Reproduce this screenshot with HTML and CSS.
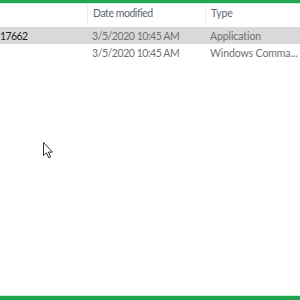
FILE: index.html
```html
<!DOCTYPE html>
<html>
<head>
<meta charset="utf-8">
<link rel="stylesheet" href="styles.css">
</head>
<body>
<div class="frame">
  <div class="topbar"></div>
  <div class="header">
    <div class="col name"></div>
    <div class="col date sep">Date modified</div>
    <div class="col type sep">Type</div>
  </div>
  <div class="row selected">
    <div class="col name strong"><span class="fname">17662</span></div>
    <div class="col date">3/5/2020 10:45 AM</div>
    <div class="col type">Application</div>
  </div>
  <div class="row">
    <div class="col name"></div>
    <div class="col date">3/5/2020 10:45 AM</div>
    <div class="col type">Windows Comma...</div>
  </div>
  <div class="empty">
    <svg class="cursor" width="12" height="19" viewBox="0 0 12 19">
      <path d="M1.5 1.5 L1.5 14.5 L4.5 11.8 L6.8 16.8 L8.6 16 L6.4 11.1 L10.5 11.1 Z" fill="#fff" stroke="#333" stroke-width="1" stroke-linejoin="round"/>
    </svg>
  </div>
  <div class="bottombar"></div>
</div>
</body>
</html>
```
FILE: styles.css
```css
html, body {
  margin: 0;
  padding: 0;
  background: #fff;
}
.frame {
  width: 300px;
  height: 300px;
  display: flex;
  flex-direction: column;
  font-family: Lato, "Open Sans", sans-serif;
  font-size: 10.5px;
  overflow: hidden;
}
.topbar {
  height: 3px;
  background: #22a64f;
  border-bottom: 1px solid #c9eed6;
}
.header {
  height: 23px;
  display: flex;
  align-items: center;
  color: #5b6776;
  letter-spacing: -0.1px;
}
.row {
  height: 17px;
  display: flex;
  align-items: center;
  color: #707070;
}
.row.selected {
  background: #d9d9d9;
}
.col {
  white-space: nowrap;
  overflow: hidden;
  box-sizing: border-box;
  padding-left: 5px;
}
.name {
  width: 87px;
  padding-left: 0;
}
.fname {
  display: inline-block;
  letter-spacing: -0.6px;
}
.date {
  width: 118px;
  letter-spacing: -0.45px;
}
.type {
  flex: 1;
  letter-spacing: -0.1px;
}
.sep {
  border-left: 1px solid #ececec;
  height: 19px;
  line-height: 16px;
  margin-top: -2px;
}
.strong {
  color: #1f1f1f;
}
.empty {
  flex: 1;
  padding: 80px 0 0 42px;
  border-bottom: 1px solid #c8f0d4;
}
.cursor {
  display: block;
}
.bottombar {
  height: 4px;
  background: #1ea54e;
}
```
